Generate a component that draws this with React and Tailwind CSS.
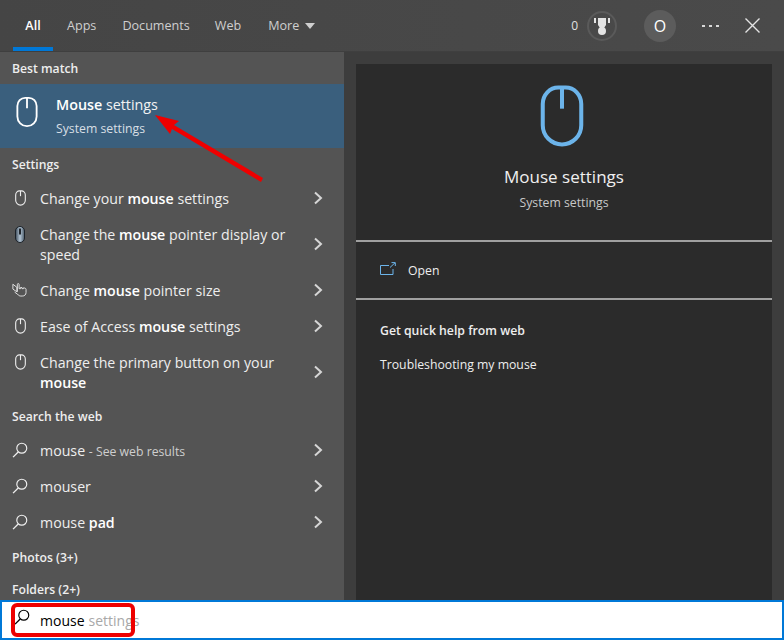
import React from 'react'

const font = { fontFamily: '"Open Sans", "Noto Sans", sans-serif' }

const MouseIcon = ({ className, stroke = 'currentColor', width = 2 }) => (
  <svg className={className} viewBox="0 0 24 34" fill="none" stroke={stroke} strokeWidth={width}>
    <path d="M1.5 10.5a8.5 9 0 0 1 8.5-9h4a8.5 9 0 0 1 8.5 9V22a10.5 10.5 0 0 1-21 0Z" />
    <path d="M12 1.5V13" />
  </svg>
)

const SearchIcon = ({ className }) => (
  <svg className={className} viewBox="0 0 18 18" fill="none" stroke="currentColor" strokeWidth="1.3">
    <circle cx="11" cy="7" r="5.6" />
    <path d="M7 11.2L1.2 17" strokeWidth="1.5" />
  </svg>
)

const Chevron = () => (
  <svg className="w-[10px] h-[14px] shrink-0" viewBox="0 0 10 14" fill="none" stroke="#d6d6d6" strokeWidth="2">
    <path d="M2 1.5L8 7L2 12.5" />
  </svg>
)

const HandIcon = () => (
  <svg className="w-[18px] h-[16px]" viewBox="0 0 18 16" fill="none" stroke="#eeeeee" strokeWidth="1">
    <path d="M1 1.5L5.5 5V10L1 7Z" />
    <path d="M6 10V1.8a1 1 0 0 1 2 0V6.5h1.6V5.2h1.6V6.5h1.6V5.6c1.4 0 2.8.4 3 1.6v3.6c0 2.6-1.8 4-4.3 4h-1.6c-1.6 0-2.6-.8-3.6-2L3 10.4" />
  </svg>
)

const DarkMouse = () => (
  <svg className="w-[10px] h-[17px]" viewBox="0 0 10 17">
    <defs>
      <linearGradient id="dm" x1="0" y1="0" x2="1" y2="0">
        <stop offset="0" stopColor="#3c4a58" />
        <stop offset="0.5" stopColor="#b4c6d6" />
        <stop offset="1" stopColor="#4a5a68" />
      </linearGradient>
    </defs>
    <rect x="0.5" y="0.5" width="9" height="16" rx="4.5" fill="url(#dm)" stroke="#1c2228" />
    <rect x="4" y="2.5" width="2" height="6" fill="#20262c" />
  </svg>
)

const OpenIcon = () => (
  <svg className="w-[16px] h-[13px] -mt-1" viewBox="0 0 16 13" fill="none" stroke="#6cb4ea" strokeWidth="1">
    <path d="M9 3.5H.5V12.5H13V7" />
    <path d="M10 5.5L15 .8M11.5.6H15.3V4" />
  </svg>
)

const Bold = ({ children }) => <span className="font-semibold text-white">{children}</span>

const Row = ({ icon, tall, children }) => (
  <div className={`flex items-center pl-3 pr-[21px] ${tall ? 'h-14' : 'h-9'}`}>
    <div className="w-4 mr-3 shrink-0 flex justify-center self-start pt-[10px]">{icon}</div>
    <div className="flex-1 pt-0.5 text-[14.2px] leading-5 text-[#eeeeee]">{children}</div>
    <Chevron />
  </div>
)

const Header = ({ children }) => (
  <div className="h-8 flex items-center pl-3 pt-0.5 text-[12.2px] font-semibold text-[#eeeeee]">{children}</div>
)

export default function App() {
  const small = <MouseIcon className="w-[11px] h-[16px] text-[#eeeeee]" width={2.4} />
  const search = <SearchIcon className="w-4 h-4 text-[#f0f0f0]" />

  return (
    <div className="relative w-[784px] h-[640px] overflow-hidden bg-[#3d3d3d] flex flex-col" style={font}>
      {/* top bar */}
      <div className="h-[52px] shrink-0 flex items-center justify-between bg-gradient-to-r from-[#454545] to-[#4a4a4a] border-b border-[#3f3f3f]">
        <div className="flex h-full items-center text-[12.6px] text-[#cfcfcf]">
          <div className="relative ml-[13px] w-10 h-full pt-0.5 flex items-center justify-center font-semibold text-white">
            All
            <div className="absolute bottom-0 left-0 right-0 h-1 bg-[#0078d7]" />
          </div>
          <span className="ml-[14px] pt-0.5">Apps</span>
          <span className="ml-[26px] pt-0.5">Documents</span>
          <span className="ml-[25px] pt-0.5">Web</span>
          <span className="ml-[27px] pt-0.5">More</span>
          <svg className="ml-[6px] w-[10px] h-[6px]" viewBox="0 0 10 6" fill="#cfcfcf"><path d="M0 0H10L5 6Z" /></svg>
        </div>
        <div className="flex items-center text-[#e0e0e0]">
          <span className="text-[12px]">0</span>
          <div className="ml-[9px] w-[30px] h-[30px] rounded-full border-2 border-[#5a5a5a] flex items-center justify-center">
            <svg className="w-[18px] h-[20px]" viewBox="0 0 18 20" fill="#e4e4e4">
              <rect x="1" y="2" width="2" height="5" />
              <rect x="15" y="2" width="2" height="5" />
              <path d="M5 2H13V9L11 12H7L5 9Z" />
              <circle cx="9" cy="15" r="4" />
            </svg>
          </div>
          <div className="ml-[27px] w-8 h-8 rounded-full bg-[#5c5c5c] flex items-center justify-center text-[16px] text-white">O</div>
          <div className="ml-[26px] flex gap-[4px]">
            <div className="w-[3px] h-[2px] bg-[#d8d8d8]" />
            <div className="w-[3px] h-[2px] bg-[#d8d8d8]" />
            <div className="w-[3px] h-[2px] bg-[#d8d8d8]" />
          </div>
          <svg className="ml-[26px] mr-[24px] w-[15px] h-[15px]" viewBox="0 0 15 15" stroke="#e4e4e4" strokeWidth="1.4"><path d="M.5.5L14.5 14.5M14.5.5L.5 14.5" /></svg>
        </div>
      </div>

      <div className="flex-1 flex min-h-0">
        {/* results */}
        <div className="w-[344px] shrink-0 bg-[#545454] overflow-hidden">
          <Header>Best match</Header>
          <div className="h-16 bg-[#3a5f7d] flex items-center">
            <MouseIcon className="ml-4 -mt-2 w-[22px] h-[32px] text-white" width={2} />
            <div className="ml-[18px] pt-0.5">
              <div className="text-[14.3px] leading-5 text-[#f2f2f2]"><Bold>Mouse</Bold> settings</div>
              <div className="mt-1 text-[12.25px] leading-5 text-[#d8dfe5]">System settings</div>
            </div>
          </div>
          <Header>Settings</Header>
          <Row icon={small}>Change your <Bold>mouse</Bold> settings</Row>
          <Row tall icon={<DarkMouse />}>Change the <Bold>mouse</Bold> pointer display or speed</Row>
          <Row icon={<HandIcon />}>Change <Bold>mouse</Bold> pointer size</Row>
          <Row icon={small}>Ease of Access <Bold>mouse</Bold> settings</Row>
          <Row tall icon={small}>Change the primary button on your <Bold>mouse</Bold></Row>
          <Header>Search the web</Header>
          <div className="mb-px">
            <Row icon={search}>mouse <span className="text-[12.25px] text-[#cfcfcf]">- See web results</span></Row>
            <Row icon={search}>mouser</Row>
            <Row icon={search}>mouse <Bold>pad</Bold></Row>
          </div>
          <Header>Photos (3+)</Header>
          <Header>Folders (2+)</Header>
        </div>

        {/* preview */}
        <div className="flex-1 pt-3 px-3">
          <div className="h-full bg-[#2b2b2b] flex flex-col">
            <div className="h-[178px] shrink-0 flex flex-col items-center border-b-2 border-[#a0a0a0]">
              <MouseIcon className="mt-5 -ml-1 w-[44px] h-[64px]" stroke="#6cb4ea" width={2.2} />
              <div className="mt-[17px] text-[17px] leading-6 text-[#f0f0f0]">Mouse settings</div>
              <div className="mt-[6px] text-[12.25px] leading-4 text-[#c8c8c8]">System settings</div>
            </div>
            <div className="h-[58px] shrink-0 flex items-center pl-6 border-b-2 border-[#a0a0a0]">
              <OpenIcon />
              <span className="ml-3 pt-0.5 text-[12.25px] text-[#eeeeee]">Open</span>
            </div>
            <div className="pl-6 pt-[23px]">
              <div className="text-[12.25px] leading-4 font-semibold text-[#eeeeee]">Get quick help from web</div>
              <div className="mt-[18px] text-[12.25px] leading-4 text-[#eeeeee]">Troubleshooting my mouse</div>
            </div>
          </div>
        </div>
      </div>

      {/* search box */}
      <div className="h-10 shrink-0 bg-white border-2 border-[#0078d7] flex items-center pl-3">
        <SearchIcon className="w-4 h-4 -mt-[6px] text-black" />
        <span className="ml-[10px] text-[14px] text-black">mouse</span>
        <span className="ml-1 text-[14px] text-[#a8a8a8]">settings</span>
      </div>

      {/* red annotations */}
      <div className="absolute left-[11px] top-[603px] w-[124px] h-[34px] border-4 border-[#ee0000] rounded-[6px]" />
      <svg className="absolute left-[150px] top-[108px] w-[120px] h-[80px]" viewBox="0 0 120 80" fill="#ee0000">
        <path d="M5 7L29 13L24 17L113 70L111 74L22 21L20 26Z" />
      </svg>
    </div>
  )
}
